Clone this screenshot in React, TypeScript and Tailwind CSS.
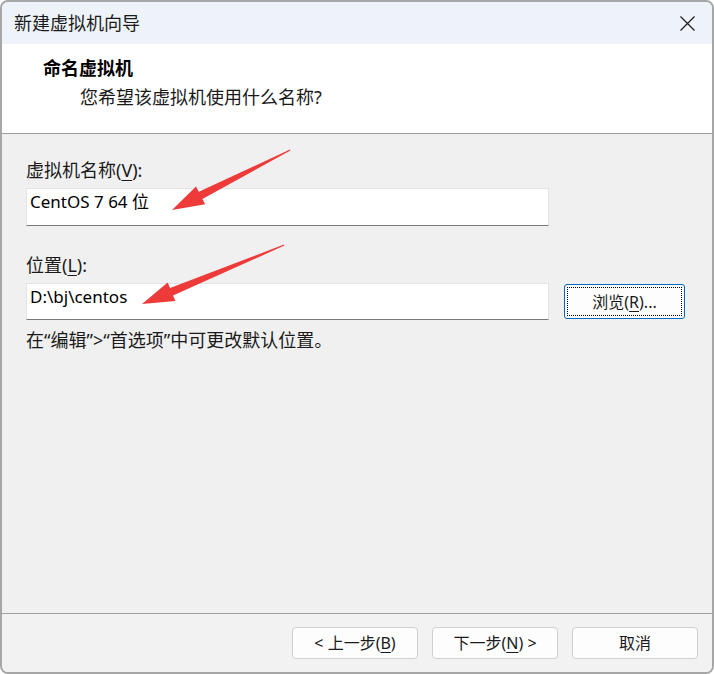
import React from "react";

const font = { fontFamily: '"Noto Sans", "Noto Sans CJK SC", sans-serif' };

function Key({ k }: { k: string }) {
  return <span className="underline underline-offset-[3px] decoration-1">{k}</span>;
}

function FooterButton({ children }: { children: React.ReactNode }) {
  return (
    <button className="flex h-[32px] w-[126px] items-center justify-center rounded-[4px] border border-[#d0d0d0] bg-[#fdfdfd] text-[16px] text-[#1a1a1a]">
      {children}
    </button>
  );
}

function Arrows() {
  return (
    <svg
      className="pointer-events-none absolute left-0 top-0"
      width="714"
      height="674"
      viewBox="0 0 714 674"
    >
      <polygon
        fill="#ef3a3a"
        points="170,208 194,184.5 196.8,189.8 288,147.6 288.4,148.6 200.4,197 203.2,202.3"
      />
      <polygon
        fill="#ef3a3a"
        points="140,302 165.7,280.5 168,286 282,242.6 282.4,243.6 171,293.4 173.4,298.9"
      />
    </svg>
  );
}

export default function App() {
  return (
    <div
      className="relative flex h-[674px] w-[714px] flex-col overflow-hidden rounded-[8px] border-2 border-[#a6a6a6] bg-[#f0f0f0] text-[#1a1a1a]"
      style={font}
    >
      {/* title bar */}
      <div className="flex h-[42px] items-center justify-between bg-[#eef3f9] pl-[12px] pr-[17px]">
        <span className="text-[18px] leading-[24px]">新建虚拟机向导</span>
        <svg width="15" height="15" viewBox="0 0 15 15">
          <path d="M0.5 0.5 L14.5 14.5 M14.5 0.5 L0.5 14.5" stroke="#1a1a1a" strokeWidth="1.2" />
        </svg>
      </div>

      {/* header */}
      <div className="h-[90px] border-b border-[#a0a0a0] bg-white pt-[12px]">
        <div className="pl-[41px] text-[18px] font-bold leading-[24px] text-black">命名虚拟机</div>
        <div className="mt-[5px] pl-[78px] text-[18px] leading-[24px]">您希望该虚拟机使用什么名称?</div>
      </div>

      {/* body */}
      <div className="flex-1 border-b border-[#a0a0a0] pl-[24px] pt-[24px]">
        <div className="text-[18px] leading-[24px]">
          虚拟机名称(<Key k="V" />):
        </div>
        <div className="mt-[6px] h-[38px] w-[523px] border border-[#e3e3e3] border-b-[#7a7a7a] bg-white pl-[3px] pt-[1px] text-[17px] leading-[24px] text-black">
          CentOS 7 64 位
        </div>

        <div className="mt-[27px] text-[18px] leading-[24px]">
          位置(<Key k="L" />):
        </div>
        <div className="mt-[6px] flex items-center gap-[15px]">
          <div className="h-[37px] w-[523px] border border-[#e3e3e3] border-b-[#7a7a7a] bg-white pl-[3px] pt-[1px] text-[17px] leading-[24px] text-black">
            D:\bj\centos
          </div>
          <button className="flex h-[35px] w-[121px] rounded-[3px] border border-[#0067c0] bg-[#fdfdfd] p-[2px]">
            <span className="flex flex-1 items-center justify-center border border-dotted border-black text-[16px] leading-[20px]">
              浏览(<Key k="R" />)...
            </span>
          </button>
        </div>

        <div className="mt-[8px] text-[18px] leading-[24px]">在“编辑”&gt;“首选项”中可更改默认位置。</div>
      </div>

      {/* footer */}
      <div className="flex h-[58px] justify-end gap-[14px] bg-[#f2f2f2] pr-[14px] pt-[13px]">
        <FooterButton>
          &lt; 上一步(<Key k="B" />)
        </FooterButton>
        <FooterButton>
          下一步(<Key k="N" />) &gt;
        </FooterButton>
        <FooterButton>取消</FooterButton>
      </div>

      <Arrows />
    </div>
  );
}
